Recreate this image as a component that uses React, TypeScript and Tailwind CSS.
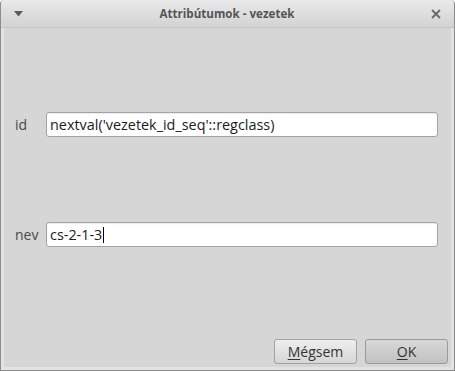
import React from "react";

const font = { fontFamily: '"Open Sans", "Noto Sans", sans-serif' };

function Field({ label, value, caret }: { label: string; value: string; caret?: boolean }) {
  return (
    <div className="flex h-[25px] items-center">
      <span className="w-[42px] shrink-0 pl-[11px] text-[14px] text-[#4a4a4a]">{label}</span>
      <div className="flex h-[25px] w-[392px] items-center rounded-[3px] border border-[#a3a3a3] bg-white pl-[3px] text-[14.4px] text-[#1c1c1c] shadow-[inset_0_1px_1px_rgba(0,0,0,0.08)]">
        <span>{value}</span>
        {caret ? <span className="ml-px h-[16px] w-px bg-black" /> : null}
      </div>
    </div>
  );
}

export default function App() {
  return (
    <div className="flex h-[371px] w-[455px] flex-col overflow-hidden rounded-t-[4px] border-x border-b border-[#8c8c8c] bg-[#d6d6d6]" style={font}>
      <div className="flex h-[28px] shrink-0 items-center justify-between border-b border-[#c4c4c4] bg-gradient-to-b from-[#e9e9e9] to-[#d3d3d3] px-[13px]">
        <svg width="9" height="6" viewBox="0 0 9 6">
          <path d="M0 0h9L4.5 5.5z" fill="#5c5c5c" />
        </svg>
        <span className="text-[11.6px] font-bold text-[#555]">Attribútumok - vezetek</span>
        <svg width="10" height="10" viewBox="0 0 10 10">
          <path d="M1 1l8 8M9 1l-8 8" stroke="#6a6a6a" strokeWidth="1.8" />
        </svg>
      </div>

      <div className="flex flex-1 flex-col border-x-[3px] border-b-[3px] border-[#e2e2e2]">
        <div className="flex flex-col gap-[85px] pt-[84px]">
          <Field label="id" value="nextval('vezetek_id_seq'::regclass)" />
          <Field label="nev" value="cs-2-1-3" caret />
        </div>

        <div className="mt-auto flex justify-end gap-[8px] pb-[3px] pr-[3px]">
          <button className="h-[25px] w-[83px] rounded-[3px] border border-[#a2a2a2] bg-gradient-to-b from-[#eeeeee] to-[#d6d6d6] text-[14px] text-[#333]">
            <span className="underline underline-offset-2">M</span>égsem
          </button>
          <button className="h-[25px] w-[83px] rounded-[3px] border border-[#9a9a9a] bg-gradient-to-b from-[#d8d8d8] to-[#c2c2c2] text-[14px] text-[#333]">
            <span className="underline underline-offset-2">O</span>K
          </button>
        </div>
      </div>
    </div>
  );
}
